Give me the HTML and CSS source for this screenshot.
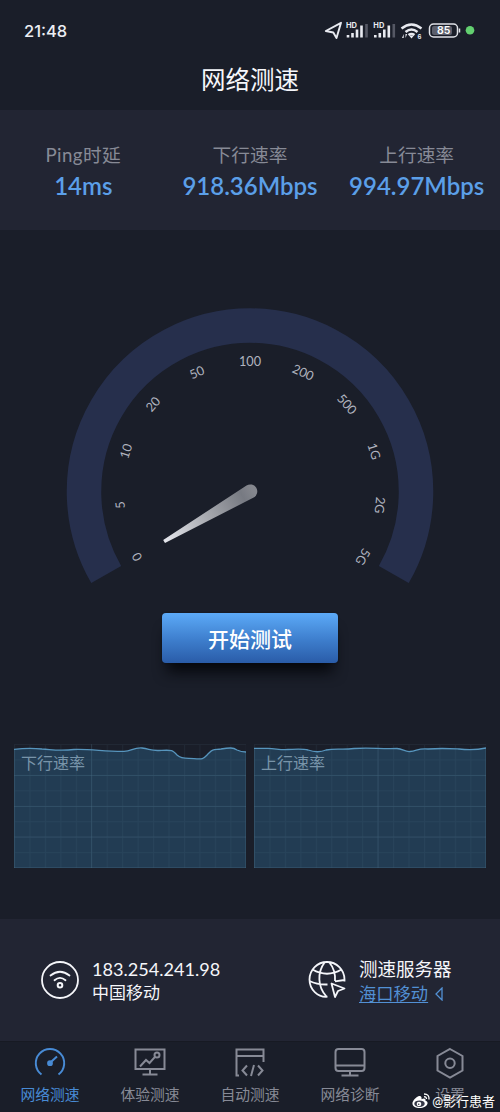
FILE: index.html
```html
<!DOCTYPE html>
<html lang="zh-CN">
<head>
<meta charset="utf-8">
<title>网络测速</title>
<link rel="stylesheet" href="styles.css">
</head>
<body>
<div class="app">
  <header class="status">
    <span class="clock">21:48</span>
    <svg class="status-icons" width="152" height="24" viewBox="0 0 152 24">
      <path d="M1.800 11L17 2.800L12.500 18L9.300 12.500Z" fill="none" stroke="#e8eaf0" stroke-width="1.900" stroke-linejoin="round"/>
      <g id="sig">
        <text x="22" y="8" class="hd" textLength="11" lengthAdjust="spacingAndGlyphs">HD</text>
        <path d="M24 17.500v-2.500M28.500 17.500v-4.500M33 17.500v-8M37.500 17.500V5.500" class="bar"/>
        <path d="M42.500 17.500V4" class="bar dim"/>
      </g>
      <use href="#sig" x="27.300"/>
      <g fill="none" stroke="#e8eaf0" stroke-width="2.400">
        <path d="M77.500 8.500Q87.500 .5 97.500 8.500M81.500 12Q87.500 7 93.500 12M84.500 15Q87.500 12.800 90.500 15"/>
      </g>
      <path d="M85 15.500h5L87.500 18.500zM78 18l1.700-4v4zM81.500 14v4l1.700-4z" fill="#e8eaf0"/>
      <text x="93.500" y="18.500" class="six">6</text>
      <rect x="105.500" y="4" width="28" height="13" rx="4" fill="none" stroke="#dfe1e7" stroke-width="1.500"/>
      <rect x="108" y="6" width="20" height="9" rx="2" fill="#5c5f6c"/>
      <path d="M135.500 8.500v4" stroke="#dfe1e7" stroke-width="1.500"/>
      <text x="119.700" y="14.300" class="batt">85</text>
      <circle cx="146" cy="10.300" r="4.300" fill="#63d070"/>
    </svg>
  </header>
  <h1 class="title">网络测速</h1>
  <section class="stats">
    <div class="stat"><span class="label ping">Ping时延</span><b class="value">14ms</b></div>
    <div class="stat"><span class="label">下行速率</span><b class="value">918.36Mbps</b></div>
    <div class="stat"><span class="label">上行速率</span><b class="value">994.97Mbps</b></div>
  </section>
  <section class="gauge">
    <svg width="380" height="300" viewBox="-190 -191.500 380 300">
      <defs>
        <linearGradient id="needle" gradientUnits="userSpaceOnUse" x1="-86" y1="50" x2="4" y2="0">
          <stop offset="0" stop-color="#e6e7ed"/><stop offset="0.500" stop-color="#a5a7ad"/><stop offset="0.880" stop-color="#777a82"/><stop offset="1" stop-color="#85878e"/>
        </linearGradient>
      </defs>
      <path d="M-143.800 83A166 166 0 1 1 143.800 83" fill="none" stroke="#262f4c" stroke-width="34.500"/>
      <path d="M-86.800 48.500L-3.500 -6A7 7 0 1 1 3.700 6L-85 51.500Z" fill="url(#needle)"/>
      <g class="ticks">
        <text transform="rotate(-120) translate(0 -126)">0</text>
        <text transform="rotate(-96) translate(0 -126)">5</text>
        <text transform="rotate(-72) translate(0 -126)">10</text>
        <text transform="rotate(-48) translate(0 -126)">20</text>
        <text transform="rotate(-24) translate(0 -126)">50</text>
        <text transform="translate(0 -126)">100</text>
        <text transform="rotate(24) translate(0 -126)">200</text>
        <text transform="rotate(48) translate(0 -126)">500</text>
        <text transform="rotate(72) translate(0 -126)">1G</text>
        <text transform="rotate(96) translate(0 -126)">2G</text>
        <text transform="rotate(120) translate(0 -126)">5G</text>
      </g>
    </svg>
    <button class="start">开始测试</button>
  </section>
  <section class="charts">
    <svg width="232" height="124" viewBox="0 0 232 124">
      <defs>
        <pattern id="grid" width="15.450" height="15.450" patternUnits="userSpaceOnUse"><path d="M0 .5H15.450M.5 0V15.450" stroke="#6692a8" stroke-opacity=".09" fill="none"/></pattern>
      </defs>
      <path d="M0 5.300C12 4 18 4 28 5C42 6 46 7 60 5.500C78 5 90 7.500 110 7.300C118 7 119 3.500 128 4C136 5 136 6.800 145 6.500C158 6 158 5.500 163 11C168 15.500 173 14 180 14.700C190 15.500 189 15 195 9C199 5 200 6 207 5C216 3.500 219 3.500 223 6Q227 8 232 8V124H0Z" fill="#223c53"/>
      <rect width="232" height="124" fill="url(#grid)"/>
      <path d="M77.500 0V124M0 31.500H232M0 62.500H232M0 93H232M.5 5V124M231.500 8V124M0 123.500H232" class="major"/>
      <path d="M0 5.300C12 4 18 4 28 5C42 6 46 7 60 5.500C78 5 90 7.500 110 7.300C118 7 119 3.500 128 4C136 5 136 6.800 145 6.500C158 6 158 5.500 163 11C168 15.500 173 14 180 14.700C190 15.500 189 15 195 9C199 5 200 6 207 5C216 3.500 219 3.500 223 6Q227 8 232 8" class="line"/>
      <text x="7" y="25" class="chart-label">下行速率</text>
    </svg>
    <svg width="232" height="124" viewBox="0 0 232 124">
      <path d="M0 4.300H14C24 5 27 6 34 5.500C47 5 49 4.700 54 6Q64 9.500 72 6C82 4 88 6 100 4.500C116 3.500 126 5 143 4.500C149 5 151 8 156 7.500C163 7 164 4 174 5C187 4 195 4.500 205 5Q220 6.500 232 4V124H0Z" fill="#223c53"/>
      <rect width="232" height="124" fill="url(#grid)"/>
      <path d="M124 0V124M0 31.500H232M0 62.500H232M0 93H232M.5 4V124M231.500 4V124M0 123.500H232" class="major"/>
      <path d="M0 4.300H14C24 5 27 6 34 5.500C47 5 49 4.700 54 6Q64 9.500 72 6C82 4 88 6 100 4.500C116 3.500 126 5 143 4.500C149 5 151 8 156 7.500C163 7 164 4 174 5C187 4 195 4.500 205 5Q220 6.500 232 4" class="line"/>
      <text x="7" y="25" class="chart-label">上行速率</text>
    </svg>
  </section>
  <section class="hosts">
    <div class="host">
      <svg width="40" height="40" viewBox="0 0 40 40" fill="none" stroke="#f5f6fa" stroke-width="1.800" stroke-linecap="round">
        <circle cx="20" cy="20" r="18"/><path d="M10.500 15.500Q20 8 29.500 15.500M14.500 20.200Q20 15.500 25.500 20.200"/><circle cx="20" cy="25.300" r="2.300" stroke-width="2"/>
      </svg>
      <div class="host-text"><span class="ip">183.254.241.98</span><span class="isp">中国移动</span></div>
    </div>
    <div class="host server">
      <svg width="40" height="40" viewBox="0 0 40 40" fill="none" stroke="#f5f6fa" stroke-width="1.800" stroke-linejoin="round">
        <path d="M20.500 36.700C10.500 37.500 2.500 29.300 2.500 19.500A17.500 17.500 0 0 1 37.500 19.500V21.500M18 2C10 12 10.500 27 19.500 36.500M22 2C27 8 28.500 14 28 21M5.500 9.500Q20 18 34.500 9.500M2.500 21Q10 24.800 20.500 24.500M28 21.300Q34 20.500 37.500 20"/>
        <path d="M24.500 23.500L37.500 28.500L31 31L28 37Z"/>
      </svg>
      <div class="host-text"><span class="server-title">测速服务器</span><span class="server-pick"><a class="link">海口移动</a><svg width="8" height="14" viewBox="0 0 8 14"><path d="M7 1V13L1 7Z" fill="none" stroke="#5290d4" stroke-width="1.300"/></svg></span></div>
    </div>
  </section>
  <nav class="tabs">
    <div class="tab active">
      <svg viewBox="0 0 32 32"><path d="M7.500 27.500A14.200 14.200 0 1 1 24.500 27.500M17.500 14.500L23 9.500"/><circle cx="16" cy="16.200" r="1.900" fill="currentColor"/></svg><span>网络测速</span>
    </div>
    <div class="tab">
      <svg viewBox="0 0 32 32"><path d="M16 22H1.500V2.500H30.500V22H16V27.500M8.500 27.500H23.500M6 19.500L12 13L15.500 16L21 9.800"/><circle cx="23" cy="8" r="2.500"/></svg><span>体验测速</span>
    </div>
    <div class="tab">
      <svg viewBox="0 0 32 32"><path d="M5 28.500H2.500V2.500H29.500V15M2.500 9H29.500M13 18.500L8.500 23.500L13 28.500M24 18.500L28.500 23.500L24 28.500M20 18L17 29"/></svg><span>自动测速</span>
    </div>
    <div class="tab">
      <svg viewBox="0 0 32 32"><rect x="1.500" y="2" width="29" height="22" rx="3"/><path d="M1.500 18.500H30.500M16 24V28.500M7.500 28.500H24.500"/></svg><span>网络诊断</span>
    </div>
    <div class="tab">
      <svg viewBox="0 0 32 32"><path d="M16 2L28.500 9V23.500L16 30.500L3.500 23.500V9Z"/><circle cx="16" cy="16.300" r="4.700"/></svg><span>设置</span>
    </div>
  </nav>
  <div class="watermark">
    <svg width="18" height="16" viewBox="0 0 18 16"><path d="M7 3C4 4 0 8 .5 11C1 14 5 15.500 9 15C13 14.500 16 12 15.500 9.500C15.300 8.400 14 8 13.500 7.800C14 5.500 12 5 9.500 6.200C10 4 9 2.500 7 3Z" fill="#fff"/><ellipse cx="7.500" cy="10.700" rx="5.200" ry="3.300" fill="#343746"/><circle cx="7" cy="11" r="2.300" fill="#fff"/><circle cx="6.700" cy="11.300" r=".8" fill="#343746"/><path d="M12 1Q17.500 1 17 6.500M12 3.800Q14.500 3.500 14.500 6" fill="none" stroke="#fff" stroke-width="1.300"/></svg>
    <span>@影行患者</span>
  </div>
</div>
</body>
</html>
```
FILE: styles.css
```css
* { box-sizing: border-box; }
body { margin: 0; background: #1a1e29; }
.app {
  position: relative; display: flex; flex-direction: column;
  width: 500px; height: 1112px; overflow: hidden;
  background: #1a1e29; color: #f5f6fa;
  font-family: Lato, "Noto Sans CJK SC", sans-serif;
}
.status { display: flex; justify-content: space-between; height: 60px; padding: 20px 24px 0; }
.clock { font: 500 16.500px/22px Inter, sans-serif; color: #eceef3; }
.hd { font: 700 7.500px Inter, sans-serif; fill: #e8eaf0; }
.six { font: 700 6px Inter, sans-serif; fill: #e8eaf0; }
.batt { font: 600 10.500px Inter, sans-serif; fill: #fff; text-anchor: middle; }
.bar { stroke: #e8eaf0; stroke-width: 2.600; fill: none; }
.dim { stroke: #555864; }
.title { height: 50px; margin: 0; font-size: 24.500px; line-height: 39px; font-weight: 400; text-align: center; }
.stats { display: grid; grid-template-columns: repeat(3, 1fr); height: 120px; padding-top: 32px; background: #222533; }
.stat { display: flex; flex-direction: column; align-items: center; }
.label { font-size: 18.700px; line-height: 26px; color: #878a96; font-weight: 400; }
.ping { letter-spacing: .4px; }
.value { font-size: 24px; line-height: 36px; color: #5b9fe8; font-weight: 600; white-space: nowrap; }
.gauge { display: flex; flex-direction: column; align-items: center; height: 514px; padding-top: 70px; }
.ticks { font: 400 12.700px Lato, sans-serif; fill: #b0b3bf; text-anchor: middle; }
.start {
  width: 176px; height: 50px; margin-top: 13px; padding: 0 0 1px; border: 0; border-radius: 4px;
  font: 500 21px "Noto Sans CJK SC", sans-serif; color: #fff;
  background: linear-gradient(#5caaf7, #3d7dcc 55%, #2a5ca8);
  box-shadow: 0 14px 14px -5px #06080d, 0 0 2px #10131c;
}
.charts { display: flex; gap: 8px; padding: 0 14px; height: 175px; }
.major { stroke: #6692a8; stroke-opacity: .16; fill: none; }
.line { stroke: #5795bd; stroke-width: 1.300; fill: none; }
.chart-label { font: 400 16px "Noto Sans CJK SC", sans-serif; fill: #7894a9; }
.hosts { display: flex; height: 122px; padding: 41px 0 0 40px; background: #222533; }
.host { display: flex; flex: 0 0 267px; gap: 12px; }
.host-text { display: flex; flex-direction: column; margin-top: -3px; }
.ip { font-size: 18.100px; line-height: 24px; }
.isp { font-size: 17px; line-height: 24px; }
.server-title { font-size: 18.500px; line-height: 24px; }
.server-pick { display: flex; align-items: center; gap: 7px; height: 25px; }
.link { font-size: 17.300px; line-height: 22px; color: #5290d4; text-decoration: underline; text-underline-offset: 2px; text-decoration-thickness: 1px; }
.tabs { display: grid; grid-template-columns: repeat(5, 1fr); height: 71px; padding-top: 5px; border-top: 1px solid #171a23; }
.tab { display: flex; flex-direction: column; align-items: center; color: #878a96; font-size: 14.800px; line-height: 30px; }
.tab svg { width: 32px; height: 32px; fill: none; stroke: currentColor; stroke-width: 2; }
.tab.active { color: #488bd5; }
.watermark { position: absolute; right: 5px; bottom: 2px; display: flex; align-items: center; gap: 2px; color: #fff; font-size: 13px; line-height: 18px; text-shadow: 0 0 2px #222; }
```
